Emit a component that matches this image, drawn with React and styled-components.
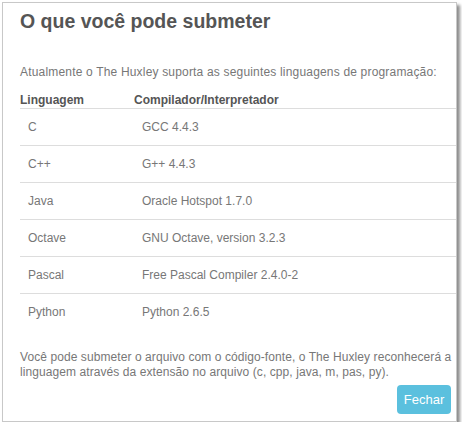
import React from "react";
import styled, { createGlobalStyle } from "styled-components";

const Global = createGlobalStyle`
  html, body { margin: 0; padding: 0; background: #ffffff; }
  body { font-family: "Liberation Sans", Arial, sans-serif; }
  * { box-sizing: border-box; }
`;

const Dialog = styled.div`
  margin: 2px 0 0 2px;
  width: 455px;
  height: 420px;
  background: #fff;
  border: 1px solid #c8c8c8;
  box-shadow: 3px 3px 3px rgba(0, 0, 0, 0.45);
  padding: 6px 0 0 17px;
  display: flex;
  flex-direction: column;
`;

const Title = styled.h3`
  margin: 0;
  font-size: 19.5px;
  line-height: 24px;
  font-weight: bold;
  color: #555;
`;

const Text = styled.p`
  margin: ${(p) => p.$mt}px 0 0 0;
  width: 438px;
  font-size: 12px;
  letter-spacing: ${(p) => p.$ls}px;
  line-height: ${(p) => p.$lh}px;
  color: #777;
`;

const Table = styled.table`
  margin-top: 11px;
  width: 436px;
  border-collapse: collapse;
  font-size: 12px;
  color: #777;
`;

const Th = styled.th`
  text-align: left;
  padding: 0;
  line-height: 16px;
  font-weight: bold;
  color: #555;
  border-bottom: 1px solid #ddd;
  width: ${(p) => p.$w || "auto"};
`;

const Td = styled.td`
  padding: 8px;
  line-height: 20px;
  border-top: ${(p) => (p.$first ? "none" : "1px solid #ddd")};
`;

const Footer = styled.div`
  display: flex;
  justify-content: flex-end;
  margin-top: 5px;
  padding-right: 5px;
`;

const Button = styled.button`
  width: 54px;
  height: 29px;
  border: none;
  border-radius: 4px;
  background: #5bc0de;
  color: #fff;
  font-family: "Liberation Sans", Arial, sans-serif;
  font-size: 13px;
  padding: 0;
`;

const rows = [
  ["C", "GCC 4.4.3"],
  ["C++", "G++ 4.4.3"],
  ["Java", "Oracle Hotspot 1.7.0"],
  ["Octave", "GNU Octave, version 3.2.3"],
  ["Pascal", "Free Pascal Compiler 2.4.0-2"],
  ["Python", "Python 2.6.5"],
];

export default function App() {
  return (
    <>
      <Global />
      <Dialog>
        <Title>O que você pode submeter</Title>
        <Text $mt={30} $lh={18} $ls={0.18}>
          Atualmente o The Huxley suporta as seguintes linguagens de programação:
        </Text>
        <Table>
          <thead>
            <tr>
              <Th $w="114px">Linguagem</Th>
              <Th>Compilador/Interpretador</Th>
            </tr>
          </thead>
          <tbody>
            {rows.map(([l, c], i) => (
              <tr key={l}>
                <Td $first={i === 0}>{l}</Td>
                <Td $first={i === 0}>{c}</Td>
              </tr>
            ))}
          </tbody>
        </Table>
        <Text $mt={20} $lh={15} $ls={0.08}>
          Você pode submeter o arquivo com o código-fonte, o The Huxley reconhecerá a
          linguagem através da extensão no arquivo (c, cpp, java, m, pas, py).
        </Text>
        <Footer>
          <Button>Fechar</Button>
        </Footer>
      </Dialog>
    </>
  );
}
